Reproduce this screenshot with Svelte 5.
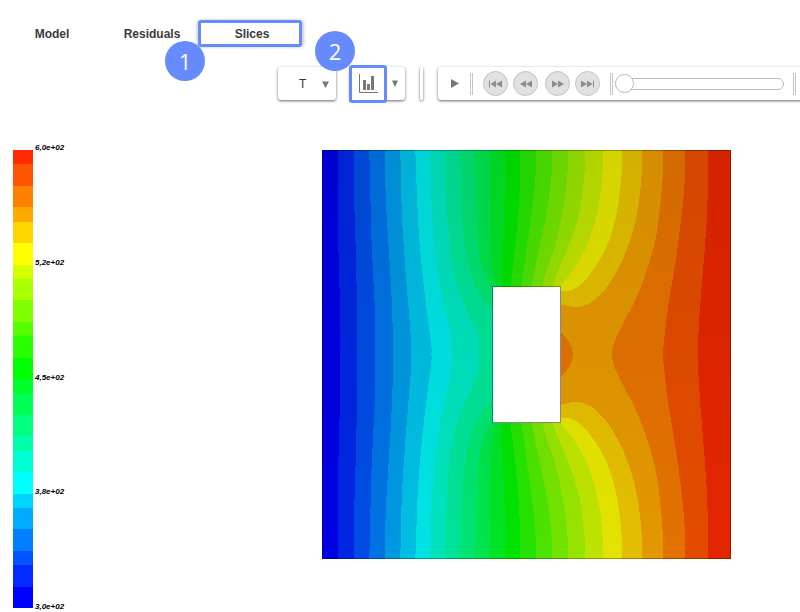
<script>
  const tabs = ['Model', 'Residuals', 'Slices'];
  const fields = ['T', 'p', 'U'];
  const labels = ['6,0e+02', '5,2e+02', '4,5e+02', '3,8e+02', '3,0e+02'];

  let active = $state('Slices');
  let field = $state('T');
  let frame = $state(0);

  const hues = [
    '#0000ff', '#002aff', '#0055ff', '#0080ff', '#00aaff', '#00d5ff',
    '#00ffff', '#00ffd5', '#00ffaa', '#00ff80', '#00ff55', '#00ff2a',
    '#00ff00', '#2aff00', '#55ff00', '#80ff00', '#aaff00', '#d5ff00',
    '#ffff00', '#ffd500', '#ffaa00', '#ff8000', '#ff5500', '#ff2a00'
  ];
  const steps = [14, 22, 21, 15, 21, 22, 14, 21, 22, 14, 22, 21];
  const scale = [...hues].reverse().map((color, i) => ({ color, size: steps[i % 12] }));

  // Isotherms of the upper half, top edge to mid line; the lower half mirrors them.
  const size = 409;
  const isotherms = [
    [[16, 0], [16, 88], [17, 130], [18, 172], [18, 205]],
    [[32, 0], [32, 50], [33, 84], [34, 124], [35, 165], [35, 205]],
    [[47, 0], [48, 42], [49, 84], [50, 107], [51, 128], [52, 147], [53, 170], [53, 205]],
    [[63, 0], [63, 30], [64, 60], [66, 92], [69, 142], [71, 195], [71, 205]],
    [[78, 0], [79, 45], [80, 72], [83, 118], [86, 155], [89, 195], [89, 205]],
    [[93, 0], [94, 27], [96, 75], [99, 112], [104, 157], [109, 195], [109, 205]],
    [[108, 0], [109, 45], [112, 92], [117, 132], [123, 162], [128, 182], [130, 197], [130, 205]],
    [[123, 0], [124, 42], [127, 92], [132, 125], [139, 148], [148, 168], [155, 185], [157, 200], [157, 205]],
    [[138, 0], [139, 45], [142, 92], [147, 118], [154, 138], [163, 152], [171, 159]],
    [[153, 0], [154, 55], [156, 95], [160, 118], [165, 132], [171, 139]],
    [[168, 0], [168, 75], [170, 118], [174, 137]],
    [[183, 0], [182, 65], [180, 112], [180, 137]],
    [[198, 0], [197, 48], [193, 95], [188, 137]],
    [[214, 0], [213, 28], [210, 58], [203, 108], [199, 137]],
    [[230, 0], [229, 28], [223, 70], [217, 98], [209, 137]],
    [[246, 0], [245, 25], [241, 58], [233, 95], [225, 118], [220, 137]],
    [[263, 0], [262, 25], [257, 62], [248, 92], [238, 115], [230, 137]],
    [[281, 0], [280, 28], [276, 58], [267, 90], [253, 117], [239, 135]],
    [[300, 0], [299, 28], [294, 65], [285, 95], [271, 120], [258, 135], [246, 141], [238, 141]],
    [[320, 0], [319, 30], [313, 72], [301, 108], [286, 135], [272, 150], [263, 155], [253, 157], [238, 154]],
    [[341, 0], [340, 33], [334, 85], [324, 122], [312, 152], [295, 185], [290, 200], [290, 205]],
    [[363, 0], [362, 38], [357, 85], [351, 125], [345, 162], [341, 198], [341, 205]],
    [[386, 0], [385, 58], [382, 105], [378, 155], [376, 188], [376, 205]]
  ].map((line) => line.map(([x, y]) => [x + 0.3, y]));

  // Catmull-Rom spline through the sampled points, written as cubic segments.
  function curve(p) {
    let d = '';
    for (let i = 0; i < p.length - 1; i++) {
      const a = p[i - 1] ?? p[i], b = p[i], c = p[i + 1], e = p[i + 2] ?? c;
      d += `C${b[0] + (c[0] - a[0]) / 6} ${b[1] + (c[1] - a[1]) / 6} ${c[0] - (e[0] - b[0]) / 6} ${c[1] - (e[1] - b[1]) / 6} ${c[0]} ${c[1]}`;
    }
    return d;
  }

  function area(p) {
    const mirrored = [...p].reverse().map(([x, y]) => [x, size - y]);
    const end = mirrored[0];
    return `M${p[0][0]} 0${curve(p)}L${end[0]} ${end[1]}${curve(mirrored)}H${size}V0Z`;
  }
</script>

<main>
  <nav>
    {#each tabs as tab}
      <a
        href="#{tab}"
        class:marked={tab === 'Slices'}
        aria-current={active === tab ? 'page' : undefined}
        onclick={() => (active = tab)}>{tab}{#if tab === 'Slices'}<span class="badge one">1</span>{/if}</a>
    {/each}
  </nav>

  <div class="toolbar">
    <div class="panel field">
      <select aria-label="Field" bind:value={field}>
        {#each fields as f}<option>{f}</option>{/each}
      </select>
      <svg class="caret" width="7" height="7" viewBox="0 0 7 7"><path d="M0 0.500H7L3.500 7Z" /></svg>
    </div>

    <div class="panel chart">
      <button class="plot-button" aria-label="Plot">
        <svg width="20" height="20" viewBox="0 0 20 20">
          <path d="M1.500 0V18.500H20" fill="none" stroke="#777" />
          <path d="M5 6h3v10H5zM9 10h3v6H9zM13 2h3v14h-3z" />
        </svg>
      </button>
      <button class="more" aria-label="Plot options">
        <svg width="6" height="7" viewBox="0 0 6 7"><path d="M0 0.500H6L3 7Z" /></svg>
      </button>
      <span class="badge two">2</span>
    </div>

    <div class="panel sliver"></div>

    <div class="panel player">
      <button class="play" aria-label="Play">
        <svg width="8" height="9" viewBox="0 0 8 9"><path d="M0 0L8 4.500L0 9Z" /></svg>
      </button>
      <span class="divider"></span>
      <div class="steps">
        <button class="round" aria-label="First">
          <svg width="13" height="8" viewBox="0 0 13 8"><path d="M0 0.500H1V7.500H0ZM7 0.500V7.500L1.500 4ZM13 0.500V7.500L7 4Z" /></svg>
        </button>
        <button class="round" aria-label="Previous">
          <svg width="12" height="8" viewBox="0 0 12 8"><path d="M6 0.500V7.500L0 4ZM12 0.500V7.500L6 4Z" /></svg>
        </button>
      </div>
      <div class="steps">
        <button class="round" aria-label="Next">
          <svg width="12" height="8" viewBox="0 0 12 8"><path d="M0 0.500V7.500L6 4ZM6 0.500V7.500L12 4Z" /></svg>
        </button>
        <button class="round" aria-label="Last">
          <svg width="13" height="8" viewBox="0 0 13 8"><path d="M0 0.500V7.500L6 4ZM6 0.500V7.500L11.500 4ZM12 0.500H13V7.500H12Z" /></svg>
        </button>
      </div>
      <span class="divider"></span>
      <input type="range" aria-label="Frame" min="0" max="100" bind:value={frame} />
      <span class="divider"></span>
    </div>
  </div>

  <div class="view">
    <div class="legend">
      <div class="scale">
        {#each scale as s}<i style="background:{s.color};flex-grow:{s.size}"></i>{/each}
      </div>
      <div class="labels">
        {#each labels as l}<span>{l}</span>{/each}
      </div>
    </div>

    <div class="stage">
      <svg width="409" height="409" viewBox="0 0 409 409" role="img" aria-label="Temperature slice">
        <defs>
          <linearGradient id="shade" x1="0" y1="0" x2="0" y2="1">
            <stop offset="0" stop-opacity="0.17" />
            <stop offset="1" stop-opacity="0.11" />
          </linearGradient>
        </defs>
        <g shape-rendering="crispEdges">
          <rect width="409" height="409" fill={hues[0]} />
          {#each isotherms as line, i}
            <path d={area(line)} fill={hues[i + 1]} />
          {/each}
          <path d="M238 181C244 186 251 196 251 204.500S244 223 238 228Z" fill={hues[21]} />
          <rect width="409" height="409" fill="url(#shade)" />
          <path d="M0 0.500H409M0.500 0V409M408.500 0V409M0 408.500H409" stroke="#000" stroke-opacity="0.32" />
          <rect x="171" y="137" width="68" height="136" fill="#fff" />
          <path d="M170.500 273V136.500H238" fill="none" stroke="#000" stroke-opacity="0.32" />
          <path d="M238.500 136V272.500H171" fill="none" stroke="#888" />
        </g>
      </svg>
    </div>
  </div>
</main>

<style>
  :global(body) {
    margin: 0;
    background: #fff;
  }
  main {
    overflow: hidden;
    font: 12px/16px "Liberation Sans", Arial, sans-serif;
    color: #333;
  }
  nav {
    display: flex;
    height: 27px;
    padding: 20px 0 0 2px;
  }
  nav a {
    width: 100px;
    line-height: 28px;
    text-align: center;
    font-weight: bold;
    color: #3b3b3b;
    text-decoration: none;
  }
  nav a.marked {
    position: relative;
    box-sizing: border-box;
    width: 104px;
    margin-left: -4px;
    padding-left: 4px;
    border: 3px solid #658bff;
    border-radius: 3px;
    line-height: 22px;
    box-shadow: 2px 0 3px #ccc, -2px 0 3px #ddd;
  }
  .badge {
    position: absolute;
    z-index: 1;
    width: 40px;
    height: 40px;
    border-radius: 50%;
    background: #658bff;
    color: #fff;
    font: 22px/40px "Open Sans", "Noto Sans", sans-serif;
    text-align: center;
  }
  .one {
    left: -36px;
    top: 18px;
  }
  .two {
    left: -35px;
    top: -36px;
  }
  button {
    display: flex;
    align-items: center;
    justify-content: center;
    padding: 0;
    border: 0;
    background: none;
  }
  svg {
    display: block;
    fill: #777;
  }
  .toolbar {
    display: flex;
    height: 33px;
    margin-top: 20px;
    padding-left: 278px;
  }
  .panel {
    display: flex;
    flex: none;
    align-items: center;
    height: 33px;
    border-radius: 3px;
    background: #fff;
    box-shadow: 0 1px 3px rgba(0, 0, 0, 0.6);
  }
  .field {
    position: relative;
    width: 58px;
  }
  .field select {
    appearance: none;
    width: 100%;
    height: 33px;
    padding: 0 0 0 21px;
    border: 0;
    background: none;
    font: 12px "Liberation Sans", Arial, sans-serif;
    color: #333;
  }
  .caret {
    position: absolute;
    right: 7px;
    top: 14px;
    pointer-events: none;
  }
  .chart {
    position: relative;
    width: 55px;
    margin-left: 14px;
  }
  .plot-button {
    box-sizing: border-box;
    flex: none;
    width: 38px;
    height: 38px;
    margin-left: -1px;
    border: 3px solid #658bff;
    border-radius: 3px;
  }
  .more {
    width: 16px;
    height: 33px;
  }
  .sliver {
    width: 3px;
    margin-left: 15px;
  }
  .player {
    width: 400px;
    margin-left: 15px;
  }
  .play {
    width: 32px;
    height: 33px;
    padding-left: 1px;
  }
  .divider {
    flex: none;
    width: 1px;
    height: 22px;
    border: solid #c4c4c4;
    border-width: 0 1px;
  }
  .steps {
    display: flex;
    gap: 5px;
    margin-left: 10px;
  }
  .steps + .steps {
    margin: 0 10px 0 7px;
  }
  .round {
    box-sizing: border-box;
    width: 25px;
    height: 25px;
    border: 1px solid #c2c2c2;
    border-radius: 50%;
    background: #e1e1e1;
  }
  .round svg {
    fill: #8c8c8c;
  }
  input {
    appearance: none;
    flex: none;
    width: 169px;
    height: 19px;
    margin: 0 9px 0 2px;
    background: none;
  }
  input::-webkit-slider-runnable-track {
    box-sizing: border-box;
    height: 12px;
    border: 1px solid #bbb;
    border-radius: 6px;
    background: #fff;
  }
  input::-webkit-slider-thumb {
    appearance: none;
    box-sizing: border-box;
    width: 19px;
    height: 19px;
    margin: -5px 0 0 -1px;
    border: 1px solid #bbb;
    border-radius: 50%;
    background: #fff;
  }
  .view {
    display: flex;
    align-items: flex-start;
    margin-top: 50px;
    padding-bottom: 4px;
  }
  .legend {
    display: flex;
    flex: none;
    box-sizing: border-box;
    width: 253px;
    height: 458px;
    padding-left: 13px;
  }
  .scale {
    display: flex;
    flex-direction: column;
    width: 20px;
  }
  .scale i {
    flex-basis: 0;
  }
  .labels {
    display: flex;
    flex-direction: column;
    justify-content: space-between;
    height: 469px;
    margin: -7px 0 0 2px;
    font: italic bold 8px/10px "Liberation Sans", Arial, sans-serif;
    color: #000;
  }
  .stage {
    display: flex;
    flex: 1;
    justify-content: center;
  }
</style>
